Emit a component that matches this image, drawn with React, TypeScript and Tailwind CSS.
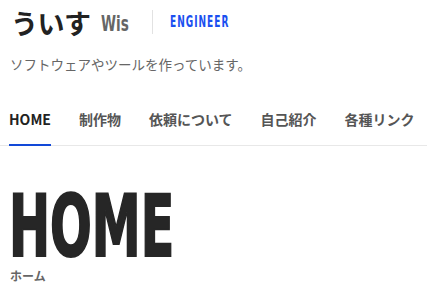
const navItems = ["HOME", "制作物", "依頼について", "自己紹介", "各種リンク"];

const jp = { fontFamily: '"Noto Sans CJK JP", "Noto Sans", sans-serif' };
const cond = { fontFamily: '"DejaVu Sans Condensed", "DejaVu Sans", sans-serif' };

export default function App() {
    return (
        <div className="w-[427px] h-[293px] overflow-hidden bg-white" style={jp}>
            <header className="flex items-center pl-[11px] pt-[2px] h-[42px]">
                <h1 className="text-[27px] font-bold text-[#222] leading-none tracking-[-0.5px]">ういす</h1>
                <span
                    className="ml-[10px] mt-[4px] text-[21px] font-bold text-[#666] leading-none inline-block origin-left scale-x-[0.72] w-[30px]"
                    style={cond}
                >
                    Wis
                </span>
                <div className="ml-[21px] w-px h-[24px] bg-[#e2e2e2]" />
                <span
                    className="ml-[17px] text-[15px] font-bold text-[#1a4ff0] leading-none tracking-[1.5px] inline-block origin-left scale-x-[0.67] w-[60px] whitespace-nowrap"
                    style={cond}
                >
                    ENGINEER
                </span>
            </header>
            <p className="pl-[10px] mt-[12px] text-[13.5px] text-[#666] leading-[20px]">ソフトウェアやツールを作っています。</p>
            <nav className="mt-[33px] flex border-b border-[#e8e8e8] pl-[9px]">
                {navItems.map((item, i) => (
                    <div
                        key={item}
                        className={`shrink-0 whitespace-nowrap mr-[28px] pb-[15px] pt-[2px] text-[14px] font-bold leading-[20px] border-b-2 -mb-px ${i === 0 ? "text-[#222] border-[#1249d8]" : "text-[#555] border-transparent"}`}
                    >
                        {item}
                    </div>
                ))}
            </nav>
            <section className="pl-[9px] pt-[46px]">
                <h2
                    className="text-[86px] font-bold text-[#262626] leading-[68px] inline-block origin-left scale-x-[0.635] whitespace-nowrap [-webkit-text-stroke:2px_#262626]"
                    style={cond}
                >
                    HOME
                </h2>
                <p className="pl-[1px] mt-[7px] text-[12px] font-bold text-[#666] leading-[16px]">ホーム</p>
            </section>
        </div>
    );
}
